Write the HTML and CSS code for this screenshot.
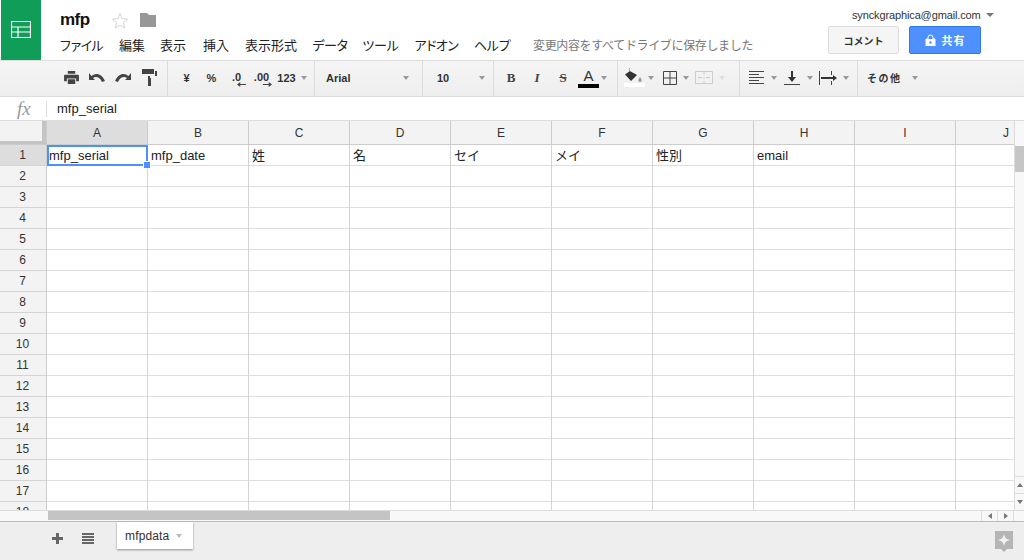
FILE: index.html
```html
<!DOCTYPE html>
<html lang="ja">
<head>
<meta charset="utf-8">
<title>mfp</title>
<link rel="stylesheet" href="styles.css">
</head>
<body>
<div class="app">
  <header class="header">
    <div class="logo">
      <svg width="20" height="17" viewBox="0 0 20 17"><path d="M.5.5h19v16H.5zM.5 6h19M.5 11h19M7 6v10.500" fill="none" stroke="#fff" stroke-width="1.200"/></svg>
    </div>
    <div class="titles">
      <div class="title-row">
        <span class="doc-title">mfp</span>
        <svg class="star" width="18" height="17" viewBox="0 0 18 17"><path d="M9 1.500l2.200 5.100 5.400.5-4.100 3.600 1.200 5.300L9 13.300l-4.700 2.700 1.200-5.300L1.400 7.100l5.400-.5z" fill="#fff" stroke="#d4d4d4" stroke-width="1"/></svg>
        <svg class="folder" width="16" height="14" viewBox="0 0 16 14"><path d="M0 0h7l2 2h7v12H0z" fill="#979797"/></svg>
      </div>
      <nav class="menu">
        <span class="k4">ファイル</span><span class="k2">編集</span><span class="k3">表示</span><span class="k5">挿入</span><span class="k6">表示形式</span><span class="k7">データ</span><span class="k8">ツール</span><span class="k9">アドオン</span><span class="k10">ヘルプ</span>
        <span class="saved">変更内容をすべてドライブに保存しました</span>
      </nav>
    </div>
    <div class="account">
      <div class="email-row"><span class="email">synckgraphica@gmail.com</span><i class="caret dark"></i></div>
      <div class="buttons">
        <button class="btn comment">コメント</button>
        <button class="btn share">
          <svg width="11" height="12" viewBox="0 0 11 12"><path d="M1 5h9v7H1zM3 5V3.500a2.500 2.500 0 0 1 5 0V5" fill="#fff" stroke="#fff" stroke-width="1"/><path d="M3.500 5V3.500a2 2 0 0 1 4 0V5z" fill="#4d90fe"/><circle cx="5.500" cy="8.500" r="1.200" fill="#4d90fe"/></svg>
          共有
        </button>
      </div>
    </div>
  </header>

  <div class="toolbar">
    <div class="group g1">
      <span class="tool w26"><svg width="15" height="13" viewBox="0 0 16 14"><path d="M4 0h8v3H4zM1 4h14a1 1 0 0 1 1 1v6h-3V8H3v3H0V5a1 1 0 0 1 1-1zM4 9h8v5H4z" fill="#444"/></svg></span>
      <span class="tool w26"><svg width="16" height="9" viewBox="0 0 16 9"><path d="M0 0v7h6L4 5c3-2 7-1 9 4l3-1C13 1 7-1 2.500 3z" fill="#444"/></svg></span>
      <span class="tool w26"><svg width="16" height="9" viewBox="0 0 16 9"><path d="M16 0v7h-6l2-2C9 3 5 4 3 9L0 8c3-7 9-9 13.500-5z" fill="#444"/></svg></span>
      <span class="tool w26"><svg width="15" height="17" viewBox="0 0 15 17"><path d="M0 0h12v5H0zM13 2h2v5H8v2h1v8H6V7h7z" fill="#444"/></svg></span>
    </div>
    <div class="group g2">
      <span class="tool w25 b">¥</span>
      <span class="tool w25 b">%</span>
      <span class="tool w25 dec">.0<svg class="arr-l" width="9" height="5" viewBox="0 0 11 6"><path d="M11 2.500H4V0L0 3l4 3V3.500h7z" fill="#444"/></svg></span>
      <span class="tool w25 dec">.00<svg class="arr-r" width="9" height="5" viewBox="0 0 11 6"><path d="M0 2.500h7V0l4 3-4 3V3.500H0z" fill="#444"/></svg></span>
      <span class="tool w25 b">123</span><i class="caret"></i>
    </div>
    <div class="group g3"><span class="b label">Arial</span><i class="caret"></i></div>
    <div class="group g4"><span class="b label">10</span><i class="caret"></i></div>
    <div class="group g5">
      <span class="tool w26 fmt b">B</span>
      <span class="tool w26 fmt b it">I</span>
      <span class="tool w26 fmt b st">S</span>
      <span class="tool w21 text-color color"><span class="a">A</span><span class="swatch black"></span></span><i class="caret"></i>
    </div>
    <div class="group g6">
      <span class="tool w22 fill color">
        <svg width="18" height="14" viewBox="0 0 18 14"><path d="M4 0l1 .7L4 2.500 12 7 6 13 0 6.500 5 3z" fill="#333"/><path d="M15 9c1 1.500 1.700 2.500 1.700 3.200a1.700 1.700 0 0 1-3.400 0c0-.7.700-1.700 1.700-3.200z" fill="#999"/></svg>
        <span class="swatch white"></span>
      </span><i class="caret"></i>
      <span class="tool w22 borders"><svg width="14" height="14" viewBox="0 0 14 14"><path d="M.5.500h13v13H.5zM7 .5v13M.5 7h13" fill="none" stroke="#444"/></svg></span><i class="caret"></i>
      <span class="tool w22 merge"><svg width="18" height="13" viewBox="0 0 18 13"><path d="M.5.500h17v12H.5zM9 .5v3M9 6v2M9 10v3M3 6.500h4M15 6.500h-4" fill="none" stroke="#ccc"/></svg></span><i class="caret faint"></i>
    </div>
    <div class="group g7">
      <span class="tool w18"><svg width="15" height="13" viewBox="0 0 15 13"><path d="M0 .5h15M0 3.500h10M0 6.500h15M0 9.500h10M0 12.500h15" stroke="#444"/></svg></span><i class="caret"></i>
      <span class="tool w22 after-caret"><svg width="16" height="14" viewBox="0 0 16 14"><path d="M0 13.500h16" stroke="#444"/><path d="M7 0h2v6h3l-4 5-4-5h3z" fill="#333"/></svg></span><i class="caret"></i>
      <span class="tool w22 after-caret"><svg width="18" height="14" viewBox="0 0 18 14"><path d="M.5 0v14M12.500 0v4M12.500 10v4" stroke="#444"/><path d="M2 6h12V4l4 3-4 3V8H2z" fill="#333"/></svg></span><i class="caret"></i>
    </div>
    <div class="group g8"><span class="more">その他</span><i class="caret"></i></div>
  </div>

  <div class="formula">
    <span class="fx">fx</span>
    <span class="formula-text">mfp_serial</span>
  </div>

  <div class="grid">
    <div class="grid-main">
      <div class="col-head">
        <div class="corner"></div>
        <div class="col sel">A</div><div class="col">B</div><div class="col">C</div><div class="col">D</div><div class="col">E</div><div class="col">F</div><div class="col">G</div><div class="col">H</div><div class="col">I</div><div class="col">J</div>
      </div>
      <div class="body">
        <div class="row-head">
          <div class="rn sel">1</div><div class="rn">2</div><div class="rn">3</div><div class="rn">4</div><div class="rn">5</div><div class="rn">6</div><div class="rn">7</div><div class="rn">8</div><div class="rn">9</div><div class="rn">10</div><div class="rn">11</div><div class="rn">12</div><div class="rn">13</div><div class="rn">14</div><div class="rn">15</div><div class="rn">16</div><div class="rn">17</div><div class="rn">18</div>
        </div>
        <div class="sheet">
          <div class="row">
            <div class="cell first">mfp_serial</div><div class="cell">mfp_date</div><div class="cell">姓</div><div class="cell">名</div><div class="cell">セイ</div><div class="cell">メイ</div><div class="cell">性別</div><div class="cell">email</div>
          </div>
          <div class="selection"><span class="handle"></span></div>
        </div>
      </div>
    </div>
    <div class="vscroll">
      <div class="vthumb"></div>
      <div class="varrows">
        <span class="varrow"><i class="tri up"></i></span>
        <span class="varrow"><i class="tri down"></i></span>
      </div>
    </div>
  </div>

  <div class="hscroll">
    <div class="htrack"><div class="hthumb"></div></div>
    <span class="harrow"><i class="tri left"></i></span>
    <span class="harrow"><i class="tri right"></i></span>
  </div>

  <footer class="tabs">
    <svg class="add" width="11" height="11" viewBox="0 0 11 11"><path d="M4 0h3v4h4v3H7v4H4V7H0V4h4z" fill="#666"/></svg>
    <svg class="list" width="12" height="11" viewBox="0 0 12 11"><path d="M0 0h12v2H0zM0 3h12v2H0zM0 6h12v2H0zM0 9h12v2H0z" fill="#666"/></svg>
    <div class="tab">mfpdata<i class="caret light"></i></div>
    <svg class="explore" width="18" height="22" viewBox="0 0 18 22"><path d="M0 0h18v18h-6l-3 3-3-3H0z" fill="#b5b5b5"/><path d="M9 3c1 4 2 5 6 6-4 1-5 2-6 6-1-4-2-5-6-6 4-1 5-2 6-6z" fill="#f2f2f2"/></svg>
  </footer>
</div>
</body>
</html>
```
FILE: styles.css
```css
* { box-sizing: border-box; }
html, body { margin: 0; height: 100%; overflow: hidden; background: #fff; }
body { font-family: "Liberation Sans", "Noto Sans CJK JP", sans-serif; color: #222; }
.app { display: flex; flex-direction: column; width: 1024px; height: 560px; }

/* header */
.header { display: flex; height: 61px; padding-left: 1px; border-bottom: 1px solid #dcdcdc; flex: none; }
.logo { width: 40px; height: 60px; background: #0f9d58; display: flex; align-items: center; justify-content: center; padding-bottom: 1px; }
.titles { margin-left: 19px; flex: 1; }
.title-row { display: flex; align-items: center; height: 29px; padding-top: 11px; }
.doc-title { font-size: 17px; font-weight: 700; color: #111; width: 51px; letter-spacing: -.5px; }
.star { margin-right: 11px; }
.menu { display: flex; align-items: center; height: 24px; font-size: 13px; margin-top: 3px; color: #222; white-space: nowrap; }
.menu span { display: block; }
.k4 { width: 59px; letter-spacing: -2.400px; margin-left: -1px; margin-right: 1px; }
.k2 { width: 41px; }
.k3 { width: 43px; }
.k5 { width: 42px; }
.k6 { width: 67px; }
.k7 { width: 50px; letter-spacing: -1px; }
.k8 { width: 52px; letter-spacing: -1px; }
.k9 { width: 60px; letter-spacing: -2.200px; }
.k10 { width: 59px; letter-spacing: -1px; }
.menu .saved { color: #777; font-size: 12px; letter-spacing: -.35px; }
.account { width: 172px; flex: none; }
.email-row { display: flex; align-items: center; height: 26px; padding-top: 4px; }
.email { font-size: 11px; color: #333; width: 134px; letter-spacing: -.13px; }
.buttons { display: flex; gap: 10px; margin-left: -24px; }
.btn { width: 71px; height: 28px; border-radius: 2px; font-family: inherit; font-size: 11px; font-weight: 700; padding: 0; display: flex; align-items: center; justify-content: center; }
.comment { background: #f5f5f5; border: 1px solid #dcdcdc; color: #333; font-size: 10px; }
.share { width: 72px; background: #4d90fe; border: 1px solid #3079ed; color: #fff; gap: 6px; letter-spacing: 1px; }

.caret { display: block; width: 0; height: 0; border: 3.500px solid transparent; border-top: 4px solid #999; border-bottom: 0; flex: none; }
.caret.dark { border-top-color: #777; border-left-width: 4px; border-right-width: 4px; }
.caret.faint { border-top-color: #ddd; }
.caret.light { border-top-color: #bbb; margin-left: 7px; }

/* toolbar */
.toolbar { display: flex; height: 36px; flex: none; background: linear-gradient(#f5f5f5, #eee); border-bottom: 1px solid #dcdcdc; }
.group { display: flex; align-items: center; border-right: 1px solid #dcdcdc; height: 35px; flex: none; font-size: 11px; color: #333; padding-bottom: 2px; }
.g1 { width: 168px; padding-left: 58px; }
.g2 { width: 147px; padding-left: 6px; }
.g3 { width: 108px; padding-left: 11px; justify-content: space-between; padding-right: 13px; }
.g4 { width: 71px; padding-left: 14px; justify-content: space-between; padding-right: 8px; }
.g5 { width: 124px; padding-left: 4px; }
.g6 { width: 122px; padding-left: 5px; }
.g7 { width: 118px; padding-left: 6px; }
.g8 { flex: 1; padding-left: 9px; border-right: 0; }
.tool { display: flex; align-items: center; justify-content: center; height: 24px; flex: none; }
.w18 { width: 21px; margin-right: 4px; }
.w21 { width: 21px; }
.w22 { width: 22px; }
.w25 { width: 25px; }
.w26 { width: 26px; }
.text-color { margin-left: 2px; margin-right: 2px; }
.fill { margin-right: 3px; }
.borders { margin-left: 5px; margin-right: 2px; }
.merge { margin-left: 4px; margin-right: 4px; }
.after-caret { margin-left: 4px; margin-right: 4px; }
.b { font-weight: 700; }
.dec { flex-direction: column; font-size: 11px; line-height: 10px; font-weight: 700; padding-top: 4px; }
.arr-l { margin-left: 10px; }
.arr-r { margin-left: 12px; }
.fmt { font-size: 13px; font-family: "Liberation Serif", serif; color: #444; }
.it { font-style: italic; }
.st { text-decoration: line-through; }
.color { flex-direction: column; }
.a { font-size: 15px; line-height: 15px; color: #333; }
.swatch { display: block; width: 21px; height: 4px; margin-top: 1px; }
.black { background: #000; }
.white { background: #fff; margin-top: 1px; }
.g2 .caret { margin-left: 2px; }
.more { font-size: 10px; font-weight: 700; color: #333; width: 45px; letter-spacing: 1.500px; }

/* formula bar */
.formula { display: flex; align-items: center; height: 24px; flex: none; border-bottom: 1px solid #dcdcdc; background: #fff; }
.fx { width: 47px; height: 16px; border-right: 1px solid #ddd; font-family: "Liberation Serif", serif; font-style: italic; font-size: 19px; line-height: 16px; color: #999; padding-left: 17px; }
.formula-text { font-size: 13px; margin-left: 10px; color: #222; }

/* grid */
.grid { display: flex; flex: 1; min-height: 0; overflow: hidden; }
.grid-main { flex: 1; min-width: 0; overflow: hidden; display: flex; flex-direction: column; }
.col-head { display: flex; height: 24px; flex: none; background: #f3f3f3; border-bottom: 1px solid #ccc; }
.corner { width: 47px; flex: none; border-right: 1px solid #ccc; box-shadow: inset -4px -3px 0 #c4c4c4; background: #f3f3f3; }
.col { width: 101px; flex: none; border-right: 1px solid #ccc; font-size: 12px; color: #333; display: flex; align-items: center; justify-content: center; }
.col.sel { background: #ddd; }
.body { display: flex; flex: 1; min-height: 0; overflow: hidden; }
.row-head { width: 47px; flex: none; background: #f3f3f3; border-right: 1px solid #ccc; }
.rn { height: 21px; border-bottom: 1px solid #d4d4d4; font-size: 12px; color: #333; display: flex; align-items: center; justify-content: center; padding-right: 1px; }
.rn.sel { background: #ddd; }
.sheet { flex: 1; min-width: 0; position: relative; background-color: #fff; background-size: 101px 21px; background-image: linear-gradient(to right, transparent 100px, #d4d4d4 100px), linear-gradient(transparent 20px, #dedede 20px); }
.row { display: flex; height: 21px; }
.cell { width: 101px; flex: none; font-size: 13px; padding: 0 3px; line-height: 21px; white-space: nowrap; color: #222; }
.cell.first { padding-left: 2px; }
.selection { position: absolute; left: 0; top: 0; width: 101px; height: 21px; border: 2px solid #4d90fe; }
.handle { position: absolute; right: -5px; bottom: -5px; width: 8px; height: 8px; background: #4d90fe; border: 1px solid #fff; }
.vscroll { width: 10px; flex: none; background: #f8f8f8; border-left: 1px solid #dcdcdc; display: flex; flex-direction: column; }
.vthumb { width: 9px; height: 26px; margin-top: 25px; background: #c6c6c6; }
.varrows { margin-top: auto; }
.varrow { display: flex; height: 17px; align-items: center; justify-content: center; border-top: 1px solid #dcdcdc; }
.tri { display: block; width: 0; height: 0; border: 3px solid transparent; }
.tri.up { border-top: 0; border-bottom: 4px solid #777; }
.tri.down { border-bottom: 0; border-top: 4px solid #777; }
.tri.left { border-left: 0; border-right: 4px solid #777; }
.tri.right { border-right: 0; border-left: 4px solid #777; }

.hscroll { display: flex; height: 12px; flex: none; background: #f8f8f8; border-top: 1px solid #dcdcdc; border-bottom: 1px solid #bbb; padding-right: 10px; }
.htrack { flex: 1; padding-left: 48px; }
.hthumb { width: 342px; height: 9px; background: #c4c4c4; }
.harrow { width: 16px; display: flex; align-items: center; justify-content: center; border-left: 1px solid #dcdcdc; }
.harrow:last-child { border-right: 1px solid #dcdcdc; width: 17px; }

/* tabs */
.tabs { height: 38px; flex: none; background: #eee; display: flex; align-items: flex-start; position: relative; }
.add { margin: 11px 0 0 52px; }
.list { margin: 11px 0 0 19px; }
.tab { width: 76px; height: 27px; margin-left: 23px; background: #fff; box-shadow: 0 1px 2px rgba(0,0,0,.4); font-size: 12px; letter-spacing: .15px; color: #333; display: flex; align-items: center; padding-left: 8px; }
.explore { position: absolute; right: 11px; top: 9px; }
```
